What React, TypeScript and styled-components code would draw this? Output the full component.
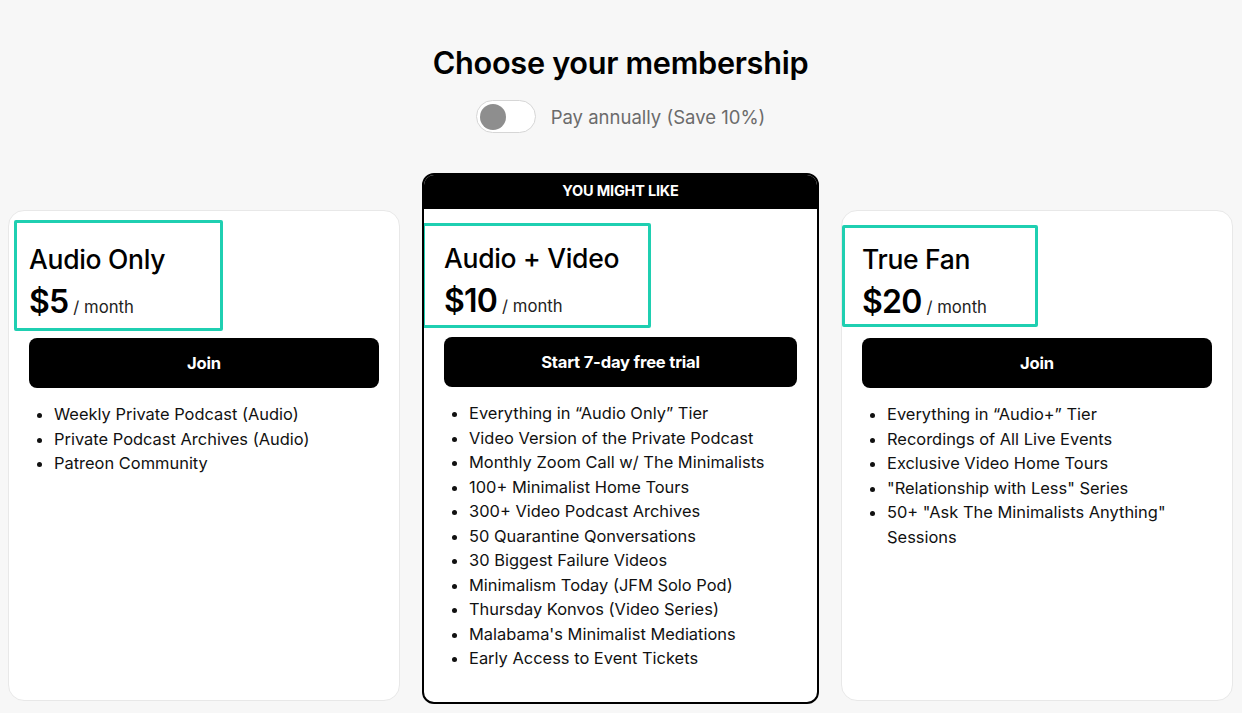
import React from "react";
import styled, { createGlobalStyle } from "styled-components";

const GlobalStyle = createGlobalStyle`
  *, *::before, *::after {
    box-sizing: border-box;
  }
  html, body {
    margin: 0;
    padding: 0;
    background: #f7f7f7;
    font-family: Inter, "Liberation Sans", sans-serif;
    color: #000;
  }
`;

const Page = styled.div`
  padding: 42px 9px 0 8px;
  display: flex;
  flex-direction: column;
  align-items: center;
`;

const Title = styled.h1`
  margin: 0;
  font-size: 30.7px;
  font-weight: 600;
  line-height: 42px;
  letter-spacing: -0.3px;
`;

const ToggleRow = styled.div`
  margin-top: 16px;
  display: flex;
  align-items: center;
  gap: 15px;
`;

const Switch = styled.div`
  width: 60px;
  height: 33px;
  border-radius: 999px;
  background: #fff;
  border: 1px solid #d6d6d6;
  display: flex;
  align-items: center;
  padding: 0 3px;
`;

const Knob = styled.span`
  width: 26px;
  height: 26px;
  border-radius: 50%;
  background: #8e8e8e;
`;

const ToggleLabel = styled.span`
  font-size: 18.5px;
  color: #6b6b6b;
`;

const Row = styled.div`
  align-self: stretch;
  margin-top: 40px;
  display: flex;
  gap: 22px;
`;

const Card = styled.div<{ $featured?: boolean }>`
  flex: ${(p) => (p.$featured ? "1 1 auto" : "0 0 392px")};
  position: relative;
  background: #fff;
  border-radius: ${(p) => (p.$featured ? "12px" : "16px")};
  border: ${(p) => (p.$featured ? "2px solid #000" : "1px solid #e8e8e8")};
  margin: ${(p) => (p.$featured ? "0" : "37px 0 3px")};
  overflow: hidden;
  display: flex;
  flex-direction: column;
`;

const Banner = styled.div`
  background: #000;
  color: #fff;
  font-size: 14.5px;
  font-weight: 700;
  letter-spacing: -0.2px;
  text-align: center;
  height: 34px;
  line-height: 32px;
`;

const Body = styled.div<{ $featured?: boolean }>`
  position: relative;
  padding: ${(p) => (p.$featured ? "34px 20px 31px" : "33px 20px 20px")};
`;

const Highlight = styled.span<{ $x: number; $y: number; $w: number; $h: number }>`
  position: absolute;
  left: ${(p) => p.$x}px;
  top: ${(p) => p.$y}px;
  width: ${(p) => p.$w}px;
  height: ${(p) => p.$h}px;
  border: 3px solid #1fcfb1;
  border-radius: 2px;
  pointer-events: none;
`;

const PlanName = styled.h2`
  margin: 0;
  font-size: 26.5px;
  font-weight: 500;
  line-height: 30px;
  letter-spacing: -0.3px;
`;

const PriceLine = styled.div`
  margin-top: 10px;
  display: flex;
  align-items: baseline;
  gap: 5px;
  line-height: 36px;
`;

const Amount = styled.span`
  font-size: 32px;
  font-weight: 600;
  letter-spacing: -0.8px;
`;

const Per = styled.span`
  font-size: 16.7px;
  color: #222;
`;

const JoinButton = styled.button`
  margin-top: 13px;
  width: 100%;
  height: 50px;
  border: none;
  border-radius: 8px;
  background: #000;
  color: #fff;
  font-family: inherit;
  font-size: 16.6px;
  font-weight: 700;
  letter-spacing: -0.2px;
  cursor: pointer;
`;

const Perks = styled.ul`
  margin: 14px 0 0;
  padding-left: 25px;
  font-size: 16.45px;
  line-height: 24.5px;
  color: #111;
`;

type Plan = {
  name: string;
  price: string;
  cta: string;
  perks: string[];
  featured?: boolean;
  mark: { x: number; y: number; w: number; h: number };
};

const plans: Plan[] = [
  {
    name: "Audio Only",
    price: "$5",
    cta: "Join",
    perks: [
      "Weekly Private Podcast (Audio)",
      "Private Podcast Archives (Audio)",
      "Patreon Community",
    ],
    mark: { x: 5, y: 9, w: 209, h: 111 },
  },
  {
    name: "Audio + Video",
    price: "$10",
    cta: "Start 7-day free trial",
    featured: true,
    perks: [
      "Everything in \u201cAudio Only\u201d Tier",
      "Video Version of the Private Podcast",
      "Monthly Zoom Call w/ The Minimalists",
      "100+ Minimalist Home Tours",
      "300+ Video Podcast Archives",
      "50 Quarantine Qonversations",
      "30 Biggest Failure Videos",
      "Minimalism Today (JFM Solo Pod)",
      "Thursday Konvos (Video Series)",
      "Malabama's Minimalist Mediations",
      "Early Access to Event Tickets",
    ],
    mark: { x: -2, y: 14, w: 229, h: 105 },
  },
  {
    name: "True Fan",
    price: "$20",
    cta: "Join",
    perks: [
      "Everything in \u201cAudio+\u201d Tier",
      "Recordings of All Live Events",
      "Exclusive Video Home Tours",
      "\"Relationship with Less\" Series",
      "50+ \"Ask The Minimalists Anything\" Sessions",
    ],
    mark: { x: 0, y: 14, w: 196, h: 102 },
  },
];

export default function App() {
  return (
    <>
      <GlobalStyle />
      <Page>
        <Title>Choose your membership</Title>
        <ToggleRow>
          <Switch>
            <Knob />
          </Switch>
          <ToggleLabel>Pay annually (Save 10%)</ToggleLabel>
        </ToggleRow>
        <Row>
          {plans.map((plan) => (
            <Card key={plan.name} $featured={plan.featured}>
              {plan.featured && <Banner>YOU MIGHT LIKE</Banner>}
              <Body $featured={plan.featured}>
                <PlanName>{plan.name}</PlanName>
                <PriceLine>
                  <Amount>{plan.price}</Amount>
                  <Per>/ month</Per>
                </PriceLine>
                <JoinButton>{plan.cta}</JoinButton>
                <Perks>
                  {plan.perks.map((perk) => (
                    <li key={perk}>{perk}</li>
                  ))}
                </Perks>
                <Highlight
                  $x={plan.mark.x}
                  $y={plan.mark.y}
                  $w={plan.mark.w}
                  $h={plan.mark.h}
                />
              </Body>
            </Card>
          ))}
        </Row>
      </Page>
    </>
  );
}
